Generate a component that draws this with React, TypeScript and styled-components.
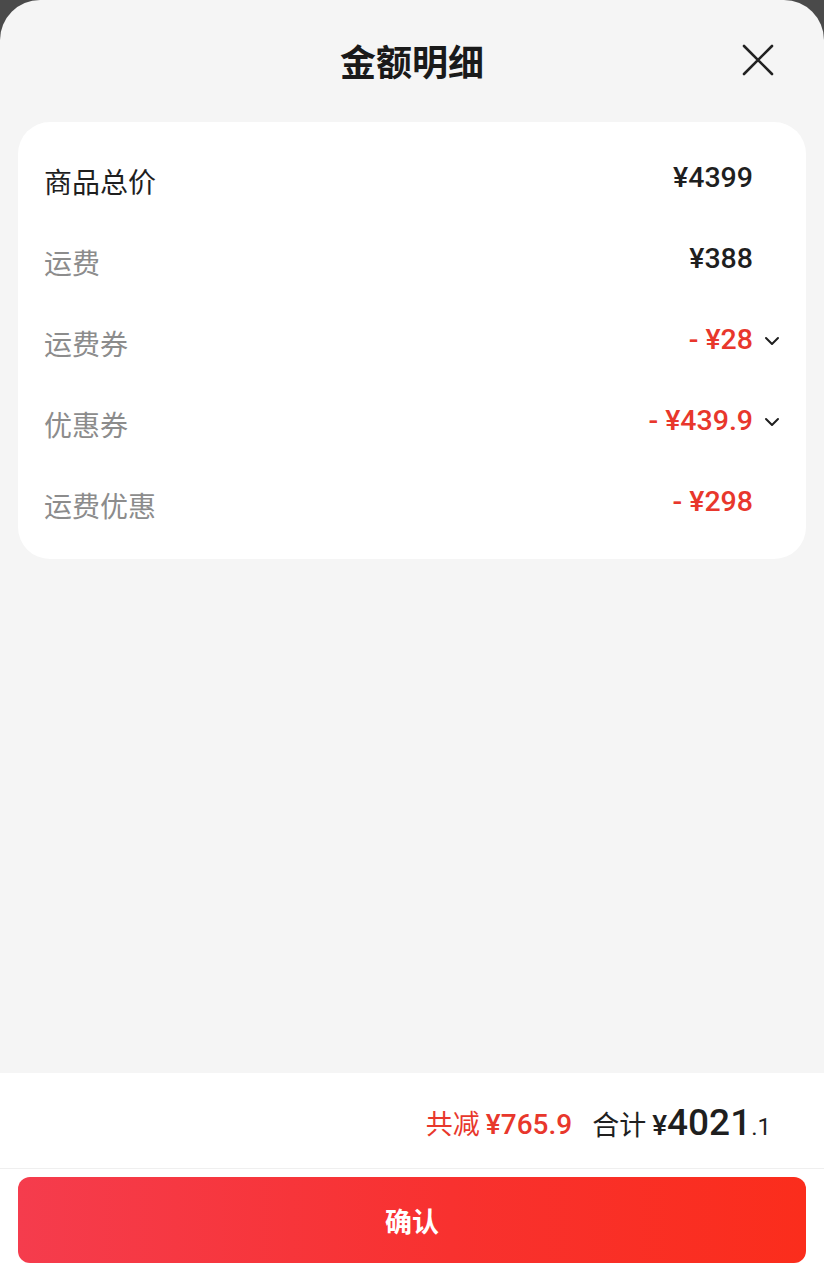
import React from "react";
import styled, { createGlobalStyle } from "styled-components";

const Global = createGlobalStyle`
  html, body { margin: 0; padding: 0; background: #4a4a4a; }
  body { font-family: "Noto Sans CJK SC", "Noto Sans", sans-serif; }
  #root { min-height: 1280px; }
`;

const Sheet = styled.div`
  min-height: 1280px;
  display: flex;
  flex-direction: column;
  background: #f5f5f5;
  border-radius: 40px 40px 0 0;
  overflow: hidden;
`;

const Header = styled.div`
  height: 122px;
  display: flex;
  align-items: center;
  justify-content: center;
  position: relative;
`;

const Title = styled.div`
  font-size: 36px;
  font-weight: 700;
  color: #1a1a1a;
  line-height: 1;
  margin-top: -2px;
`;

const Close = styled.button`
  position: absolute;
  right: 50px;
  top: 44px;
  width: 32px;
  height: 32px;
  padding: 0;
  border: 0;
  background: transparent;
  display: flex;
  align-items: center;
  justify-content: center;
`;

const Card = styled.div`
  margin: 0 18px;
  background: #fff;
  border-radius: 32px;
  padding: 20px 26px 12px 26px;
`;

const Row = styled.div`
  height: 81px;
  display: flex;
  align-items: center;
`;

const Label = styled.div<{ $strong?: boolean }>`
  flex: 1;
  font-size: 28px;
  color: ${(p) => (p.$strong ? "#1f1f1f" : "#8c8c8c")};
  line-height: 1;
  margin-top: -3px;
`;

const Value = styled.div<{ $red?: boolean }>`
  font-family: Roboto, "Noto Sans", sans-serif;
  font-weight: 500;
  font-size: 28.5px;
  line-height: 1;
  color: ${(p) => (p.$red ? "#e8372c" : "#1f1f1f")};
  margin-top: -8px;
  white-space: pre;
`;

const ChevronSlot = styled.div`
  width: 27px;
  display: flex;
  justify-content: flex-end;
  align-items: center;
  margin-top: -8px;
`;

const Spacer = styled.div`
  flex: 1;
`;

const Bottom = styled.div`
  background: #fff;
  display: flex;
  flex-direction: column;
`;

const Summary = styled.div`
  height: 95px;
  display: flex;
  align-items: center;
  justify-content: flex-end;
  padding-right: 53px;
  border-bottom: 1px solid #efefef;
  gap: 20px;
`;

const Group = styled.div<{ $red?: boolean }>`
  display: flex;
  align-items: baseline;
  color: ${(p) => (p.$red ? "#e8372c" : "#1f1f1f")};
  margin-top: 4px;
`;

const SumLabel = styled.span`
  font-size: 27px;
  margin-right: 6px;
`;

const Num = styled.span<{ $size: number; $weight?: number }>`
  font-family: Roboto, "Noto Sans", sans-serif;
  font-size: ${(p) => p.$size}px;
  font-weight: ${(p) => p.$weight ?? 500};
`;

const ButtonArea = styled.div`
  padding: 8px 18px 17px;
`;

const Confirm = styled.button`
  width: 100%;
  height: 86px;
  border: 0;
  border-radius: 12px;
  background: linear-gradient(90deg, #f53c4d 0%, #f8312f 55%, #fb2d1c 100%);
  color: #fff;
  font-family: "Noto Sans CJK SC", sans-serif;
  font-size: 27px;
  font-weight: 700;
  display: flex;
  align-items: center;
  justify-content: center;
`;

const Chevron = () => (
  <svg width="16" height="10" viewBox="0 0 16 10">
    <path d="M2 2 L8 8 L14 2" fill="none" stroke="#1f1f1f" strokeWidth="2" strokeLinecap="round" strokeLinejoin="round" />
  </svg>
);

const rows = [
  { label: "商品总价", value: "¥4399", strong: true },
  { label: "运费", value: "¥388" },
  { label: "运费券", value: "- ¥28", red: true, chevron: true },
  { label: "优惠券", value: "- ¥439.9", red: true, chevron: true },
  { label: "运费优惠", value: "- ¥298", red: true },
];

export default function App() {
  return (
    <>
      <Global />
      <Sheet>
        <Header>
          <Title>金额明细</Title>
          <Close aria-label="close">
            <svg width="32" height="32" viewBox="0 0 32 32">
              <path d="M2 2 L30 30 M30 2 L2 30" stroke="#222" strokeWidth="2.6" strokeLinecap="round" />
            </svg>
          </Close>
        </Header>
        <Card>
          {rows.map((r) => (
            <Row key={r.label}>
              <Label $strong={r.strong}>{r.label}</Label>
              <Value $red={r.red}>{r.value}</Value>
              <ChevronSlot>{r.chevron ? <Chevron /> : null}</ChevronSlot>
            </Row>
          ))}
        </Card>
        <Spacer />
        <Bottom>
          <Summary>
            <Group $red>
              <SumLabel>共减</SumLabel>
              <Num $size={28}>¥765.9</Num>
            </Group>
            <Group>
              <SumLabel>合计</SumLabel>
              <Num $size={28}>¥</Num>
              <Num $size={37}>4021</Num>
              <Num $size={24} $weight={400}>.1</Num>
            </Group>
          </Summary>
          <ButtonArea>
            <Confirm>确认</Confirm>
          </ButtonArea>
        </Bottom>
      </Sheet>
    </>
  );
}
